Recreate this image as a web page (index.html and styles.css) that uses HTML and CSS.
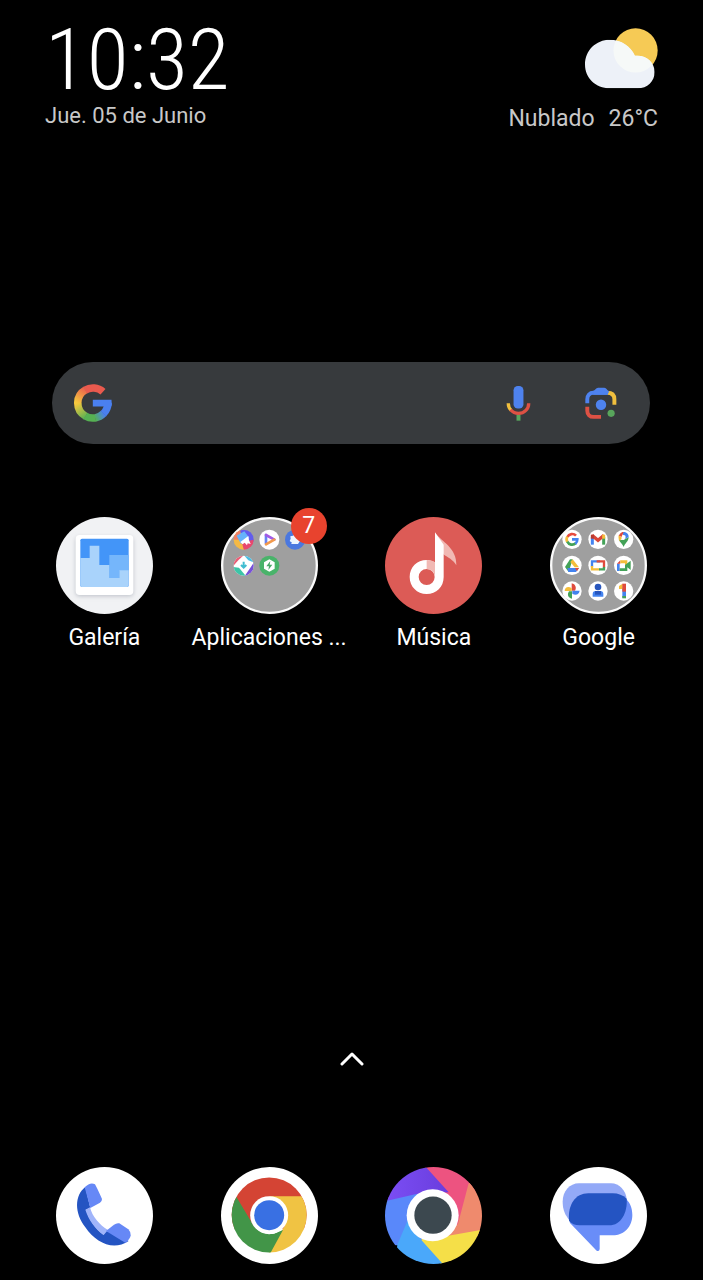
FILE: index.html
```html
<!DOCTYPE html>
<html lang="es">
<head>
<meta charset="utf-8">
<meta name="viewport" content="width=device-width, initial-scale=1">
<title>Inicio</title>
<link rel="stylesheet" href="styles.css">
</head>
<body>
<header class="status">
  <div class="clock">
    <time class="clock-time">10:32</time>
    <span class="clock-date">Jue. 05 de Junio</span>
  </div>
  <div class="weather">
    <svg class="weather-icon" viewBox="284 40 218 182" aria-hidden="true">
      <defs><clipPath id="cloud"><path d="M358 75C392 75 420 94 433 123C466 119 492 142 492 171C492 199 470 220 441 220H358C316 220 284 190 284 149C284 107 317 75 358 75Z"/></clipPath></defs>
      <circle cx="435" cy="107" r="66" fill="#f6ca55"/>
      <g clip-path="url(#cloud)"><path fill="#edf1f8" d="M280 70H500V225H280Z"/><circle cx="435" cy="107" r="66" fill="#f6f9f8"/></g>
    </svg>
    <p class="weather-text"><span>Nublado</span><span>26°C</span></p>
  </div>
</header>
<main class="home">
  <form class="search" role="search">
    <svg class="search-logo" viewBox="101 101 115 116" fill="none" stroke-width="23" aria-hidden="true">
      <defs>
        <linearGradient id="g1" gradientUnits="userSpaceOnUse" x1="140" y1="115" x2="112" y2="159"><stop stop-color="#e95a4e"/><stop offset="1" stop-color="#f6c83e"/></linearGradient>
        <linearGradient id="g2" gradientUnits="userSpaceOnUse" x1="112" y1="159" x2="140" y2="203"><stop stop-color="#f6c83e"/><stop offset="1" stop-color="#56b153"/></linearGradient>
        <linearGradient id="g3" gradientUnits="userSpaceOnUse" x1="163" y1="205" x2="192" y2="190"><stop stop-color="#56b153"/><stop offset="1" stop-color="#4a80f0"/></linearGradient>
      </defs>
      <path stroke="#e95a4e" d="M189 124.500A46 46 0 0 0 134 120"/>
      <path stroke="url(#g1)" d="M135 119.200A46 46 0 0 0 112 160"/>
      <path stroke="url(#g2)" d="M112 159A46 46 0 0 0 136 199.300"/>
      <path stroke="#56b153" d="M135 198.800A46 46 0 0 0 166 204.300"/>
      <path stroke="url(#g3)" d="M165 204.500A46 46 0 0 0 191 191"/>
      <path stroke="#4a80f0" d="M190.500 191.500A46 46 0 0 0 204 159"/>
      <path fill="#4a80f0" d="M158 149H215L216 164Q215 168 213 170H158Z"/>
    </svg>
    <input class="search-input" type="search" aria-label="Buscar">
    <button class="search-button" type="button" aria-label="Búsqueda por voz">
      <svg class="mic" viewBox="80 92 74 106" fill="none" stroke-width="10" aria-hidden="true">
        <path fill="#58a55c" d="M111 178H123V197H111Z"/>
        <path stroke="#f0bf3e" d="M86 144C86 153 89 160 95 166"/>
        <path stroke="#dd5144" d="M93 164C99 171 108 175 117 175C135 175 148 161 148 144"/>
        <rect x="102" y="92" width="30" height="68" rx="13" fill="#4e82ee"/>
      </svg>
    </button>
    <button class="search-button" type="button" aria-label="Google Lens">
      <svg class="lens" viewBox="317 96 98 97" fill="none" stroke-width="12" aria-hidden="true">
        <path stroke="#f0bf3e" d="M385 113C400 113 407 120 407 133V150"/>
        <path stroke="#4e82ee" d="M324 145V133C324 121 331 113 343 113H386"/>
        <path fill="#4e82ee" d="M342 108C348 106 350 98 357 98H376C383 98 385 107 391 109L386 119H342Z"/>
        <path stroke="#dd5144" d="M324 156V168C324 180 332 187 343 187H366"/>
        <circle cx="366" cy="150" r="16" fill="#4e82ee"/><circle cx="397" cy="176" r="11" fill="#58a55c"/>
      </svg>
    </button>
  </form>
  <nav class="grid" aria-label="Aplicaciones">
    <a class="app" href="#galeria">
      <svg class="app-icon" viewBox="31 36 291 291" aria-hidden="true">
        <defs><filter id="soft" x="-20%" y="-20%" width="140%" height="140%"><feGaussianBlur stdDeviation="6"/></filter></defs>
        <circle cx="176.500" cy="181.500" r="145.500" fill="#f1f2f4"/>
        <rect x="90" y="96" width="173" height="178" rx="12" fill="#bfc3ca" filter="url(#soft)"/>
        <rect x="90" y="90" width="173" height="180" rx="12" fill="#fff"/>
        <rect x="104" y="101" width="145" height="145" rx="5" fill="#4395f8"/>
        <path fill="#75b6fb" d="M191 150H249V197H221V220H191Z"/>
        <path fill="#a9d3fb" d="M104 159H132V122H161V180H191V219H221V196H249V241Q249 246 244 246H109Q104 246 104 241Z"/>
      </svg>
      <span class="app-label">Galería</span>
    </a>
    <a class="app" href="#aplicaciones">
      <span class="icon-wrap">
        <svg class="app-icon" viewBox="106 50 291 291" aria-hidden="true">
          <defs>
            <clipPath id="c1"><circle cx="174" cy="118" r="30"/></clipPath>
            <clipPath id="c2"><circle cx="174" cy="196" r="30"/></clipPath>
          </defs>
          <circle cx="251.500" cy="195.500" r="142" fill="#9f9f9f" stroke="#fafafa" stroke-width="7"/>
          <g clip-path="url(#c1)">
            <path fill="#f5b944" d="M140 85H180V150H140Z"/><path fill="#625cec" d="M160 85H210V125H175Z"/><path fill="#e8486e" d="M168 125L210 117V150H175Z"/><path fill="#ef8067" d="M140 85H165L160 118H140Z"/>
            <path fill="#66b3fb" d="M153 106L176 93L191 113L166 131Z"/><path fill="#fff" d="M164 125L188 107L190 120L195 131L186 129L184 135L177 127L171 132Z"/>
          </g>
          <circle cx="251" cy="118" r="30" fill="#fff"/>
          <g fill="none" stroke-width="8" stroke-linecap="round" stroke-linejoin="round"><path stroke="#6784f2" d="M241 104V129"/><path stroke="#a25be5" d="M241 104L266 118"/><path stroke="#f29a4d" d="M266 118L241 132"/></g>
          <circle cx="328" cy="118" r="30" fill="#4b78df"/><path fill="#edf5ff" d="M328 101L333 105L340 104L341 112L345 118L341 125L337 131H316L319 127L312 122L315 115L314 108L322 106Z"/>
          <g clip-path="url(#c2)">
            <path fill="#fff" d="M140 160H210V230H140Z"/><path fill="#ea5e76" d="M140 200V160H179L158 180Z"/><path fill="#49bde4" d="M171 160H210V188L188 180Z"/><path fill="#7750d9" d="M210 178V230H175L193 204Z"/><path fill="#3cc4a7" d="M140 200L160 202L183 230H140Z"/>
            <path stroke="#42bdd0" stroke-width="6" fill="none" d="M174 184V202M166 194L174 202L182 194"/>
          </g>
          <circle cx="251" cy="196" r="30" fill="#49b36a"/><path fill="#fff" d="M251 177L267 186V205L251 214L235 205V186Z"/><path fill="#49a767" d="M254 182L242 198H250L248 209L260 193H252Z"/>
        </svg>
        <span class="badge">7</span>
      </span>
      <span class="app-label">Aplicaciones ...</span>
    </a>
    <a class="app" href="#musica">
      <svg class="app-icon" viewBox="31 36 291 291" aria-hidden="true">
        <circle cx="176.500" cy="181.500" r="145.500" fill="#dc5b56"/>
        <path fill="#f1b9b4" d="M181 83C201 110 247 128 245 181C235 164 220 158 206 148Z"/>
        <path fill="#fff" fill-rule="evenodd" d="M181 82L207 119V216C207 246 185 267 156 267C127 267 105 245 105 216C105 187 127 165 156 165C165 165 173 168 181 172ZM156 192A24 24 0 1 0 156 240A24 24 0 1 0 156 192Z"/>
        <path fill="#f1b9b4" d="M156 165C166 165 173 167 181 172V216C180 204 171 192 156 192Z"/>
      </svg>
      <span class="app-label">Música</span>
    </a>
    <a class="app" href="#google">
      <svg class="app-icon" viewBox="31 36 291 291" aria-hidden="true">
        <circle cx="176.500" cy="181.500" r="142" fill="#9f9f9f" stroke="#fafafa" stroke-width="7"/>
        <g fill="#fff"><circle cx="97" cy="103" r="29"/><circle cx="175" cy="103" r="29"/><circle cx="252" cy="103" r="29"/><circle cx="97" cy="181" r="29"/><circle cx="175" cy="181" r="29"/><circle cx="252" cy="181" r="29"/><circle cx="97" cy="258" r="29"/><circle cx="175" cy="258" r="29"/><circle cx="252" cy="258" r="29"/></g>
        <g fill="none" stroke-width="8"><path stroke="#e64b3e" d="M109 92A16 16 0 0 0 83 96"/><path stroke="#f4bd3a" d="M83 95A16 16 0 0 0 83 111"/><path stroke="#43a258" d="M83 110A16 16 0 0 0 108 115"/><path stroke="#4383ef" d="M97 103H113A16 16 0 0 1 107 116"/></g>
        <g fill="none" stroke-width="9"><path stroke="#4383ef" d="M158 119V96"/><path stroke="#43a258" d="M192 119V96"/><path stroke="#d94538" stroke-width="10" d="M157 91L175 106L193 91"/><path stroke="#b63a32" d="M158 101V89"/><path stroke="#f4bd3a" d="M192 101V89"/></g>
        <path fill="#43a258" d="M237 104C241 112 249 116 252 126C255 115 267 110 267 96L252 105Z"/><path fill="#4383ef" d="M252 81C262 81 267 88 267 96L256 102L247 83Z"/><path fill="#df4b3d" d="M241 86C244 83 247 81 252 81L246 96L237 92Z"/><path fill="#f4bd3a" d="M237 91L247 98L240 109C236 102 236 96 237 91Z"/><circle cx="252" cy="96" r="6" fill="#fff"/>
        <path fill="#43a258" d="M91 163H99L87 201L76 186Z"/><path fill="#f4bd3a" d="M99 163L118 187H105L92 171Z"/><path fill="#4383ef" d="M83 189H118L109 201H86Z"/><path fill="#df4b3d" d="M106 189H118L112 199Z"/>
        <g fill="none" stroke-width="7"><path stroke="#4383ef" d="M157 185V169H181"/><path stroke="#df4b3d" d="M171 169H193V188"/><path stroke="#f4bd3a" d="M157 183V193H180"/><path stroke="#43a258" d="M178 193H193V186"/></g>
        <path fill="#4383ef" d="M232 176H240V198H232Z"/><path fill="#df4b3d" d="M232 176L242 166V176Z"/><path fill="#f4bd3a" d="M242 166H263V185H256V175H242Z"/><path fill="#43a258" d="M240 190H256V180L273 167V195L263 187V198H240Z"/>
        <path fill="#df4b3d" d="M96 257V235C108 237 111 249 106 257Z"/><path fill="#4383ef" d="M98 257H120C118 270 107 272 98 266Z"/><path fill="#43a258" d="M97 259V281C84 279 82 268 88 259Z"/><path fill="#f4bd3a" d="M96 258H75C75 246 87 243 96 250Z"/>
        <circle cx="175" cy="246" r="10" fill="#2856bd"/><path fill="#4383ef" d="M159 275V267Q159 258 168 258H182Q191 258 191 267V275Z"/><path fill="#2856bd" d="M166 258H184V269H166Z"/>
        <path fill="#4383ef" d="M248 248H259V278H248Z"/><path fill="#f4bd3a" d="M238 243L249 236V252H238Z"/><path fill="#df4b3d" d="M248 236H259V260H248Z"/><path fill="#43a258" d="M248 273H259V280H248Z"/>
      </svg>
      <span class="app-label">Google</span>
    </a>
  </nav>
  <button class="drawer" type="button" aria-label="Abrir cajón de aplicaciones">
    <svg class="drawer-icon" viewBox="0 0 24 14" aria-hidden="true"><path d="M2 12L12 2L22 12" fill="none" stroke="#fff" stroke-width="3" stroke-linecap="round" stroke-linejoin="round"/></svg>
  </button>
</main>
<footer class="dock">
  <a class="app" href="#telefono" aria-label="Teléfono">
    <svg class="app-icon" viewBox="31 35 291 291" aria-hidden="true">
      <circle cx="176.500" cy="180.500" r="145.500" fill="#fff"/>
      <path fill="#2454c2" d="M119 95C86 120 86 173 119 216C151 263 203 288 249 257L181 226L173 238C150 220 130 192 121 163L134 158Z"/>
      <path fill="#a0b4fa" d="M119 163L133 156C140 185 162 209 187 224L174 239C148 221 128 192 119 163Z"/>
      <path fill="#6688f6" d="M117 96Q134 79 148 87Q150 89 169 131Q169 139 163 142L134 158Z"/>
      <path fill="#6688f6" d="M181 227L205 208Q213 202 221 204L248 222Q256 230 255 240Q254 250 240 263Z"/>
    </svg>
  </a>
  <a class="app" href="#chrome" aria-label="Chrome">
    <svg class="app-icon" viewBox="31 35 291 291" aria-hidden="true">
      <defs><clipPath id="chrome"><circle cx="175.500" cy="179" r="112.500"/></clipPath></defs>
      <circle cx="176.500" cy="180.500" r="145.500" fill="#fff"/>
      <g clip-path="url(#chrome)"><path fill="#d44434" d="M50 50H300V220H50Z"/><path fill="#f0c343" d="M176 123H300V300H170L224 208Z"/><path fill="#429548" d="M50 79L127 208Q148 240 190 235L217 224L170 310H50Z"/></g>
      <circle cx="175.500" cy="179.500" r="57" fill="#fff"/><circle cx="175.500" cy="179.500" r="45" fill="#3970e3"/>
    </svg>
  </a>
  <a class="app" href="#camara" aria-label="Fotos">
    <svg class="app-icon" viewBox="31 35 291 291" aria-hidden="true">
      <defs>
        <clipPath id="lens"><circle cx="176.500" cy="180.500" r="145.500"/></clipPath>
        <linearGradient id="p1"><stop stop-color="#7c4ff6"/><stop offset="1" stop-color="#6a3ddd"/></linearGradient>
      </defs>
      <g clip-path="url(#lens)">
        <path fill="#ed5380" d="M140 20H310V90L250 240L200 180Z"/>
        <path fill="#ef8a6d" d="M282 84L340 60V240L200 260L250 205Z"/>
        <path fill="#f5df48" d="M325 223V340H210L120 235L200 245Z"/>
        <path fill="#5988fa" d="M20 130L180 100L140 256L70 270H20Z"/>
        <path fill="#4aa8fa" d="M101 190L140 254L210 332H60L68 268Z"/>
        <path fill="url(#p1)" d="M20 20H140L222 111L125 116L20 140Z"/>
      </g>
      <circle cx="174" cy="180" r="78" fill="#fff"/><circle cx="175" cy="179.500" r="56" fill="#3c484f"/>
    </svg>
  </a>
  <a class="app" href="#mensajes" aria-label="Mensajes">
    <svg class="app-icon" viewBox="31 35 291 291" aria-hidden="true">
      <circle cx="176.500" cy="180.500" r="145.500" fill="#fff"/>
      <path fill="#93a9f7" d="M118 84H214C239 84 259 106 261 132L240 210H120L89 194C78 181 69 165 69 139C69 108 90 84 118 84Z"/>
      <path fill="#698df8" d="M259 131C271 142 278 158 278 179C278 213 254 240 219 240H180V281Q179 290 171 286L91 203L88 190H230Z"/>
      <path fill="#2454c2" d="M146 114H219C236 114 250 120 261 130C264 172 244 210 208 210H120C106 210 96 205 88 196C84 148 107 114 146 114Z"/>
    </svg>
  </a>
</footer>
</body>
</html>
```
FILE: styles.css
```css
* {
  box-sizing: border-box;
}

body {
  display: flex;
  flex-direction: column;
  min-height: 100vh;
  margin: 0;
  background: #000;
  color: #fff;
  font-family: Roboto, "Noto Sans", sans-serif;
  font-size: 23px;
  line-height: 28px;
}

button {
  padding: 0;
  border: 0;
  background: none;
  cursor: pointer;
}

svg {
  display: block;
}

.status {
  display: flex;
  justify-content: space-between;
  padding: 28px 45px 0;
  color: #c8c8c8;
}

.clock {
  display: flex;
  flex-direction: column;
  gap: 10px;
}

.clock-time {
  color: #fff;
  font-family: "Roboto Condensed", "Liberation Sans Narrow", Roboto, sans-serif;
  font-size: 86px;
  font-weight: 300;
  line-height: 64px;
}

.clock-date {
  font-size: 22px;
}

.weather {
  display: flex;
  flex-direction: column;
  align-items: flex-end;
  gap: 16px;
}

.weather-icon {
  width: 73px;
  height: 61px;
}

.weather-text {
  display: flex;
  gap: 14px;
  margin: 0;
}

.home {
  display: flex;
  flex: 1;
  flex-direction: column;
}

.search {
  display: flex;
  align-items: center;
  height: 82px;
  margin: 229px 53px 0 52px;
  padding: 0 22px;
  border-radius: 41px;
  background: #373a3d;
}

.search-logo {
  flex: none;
  width: 38px;
  height: 38px;
}

.search-input {
  flex: 1;
  min-width: 0;
  height: 48px;
  padding: 0 16px;
  border: 0;
  outline: 0;
  background: none;
  color: #fff;
  font: inherit;
}

.search-button {
  display: grid;
  flex: none;
  width: 54px;
  height: 54px;
  margin-left: 29px;
  place-items: center;
}

.mic {
  width: 25px;
  height: 35px;
}

.lens {
  width: 32px;
  height: 32px;
}

.grid,
.dock {
  display: grid;
  grid-template-columns: repeat(4, 1fr);
  padding: 0 22px;
}

.grid {
  margin-top: 73px;
}

.app {
  display: flex;
  flex-direction: column;
  align-items: center;
  gap: 10px;
  color: #fff;
  text-decoration: none;
}

.app-icon {
  width: 97px;
  height: 97px;
}

.app-label {
  white-space: nowrap;
}

.icon-wrap {
  position: relative;
}

.badge {
  position: absolute;
  top: -9px;
  right: -9px;
  width: 36px;
  height: 36px;
  border-radius: 50%;
  background: #e8432e;
  line-height: 36px;
  text-align: center;
}

.drawer {
  display: grid;
  width: 48px;
  height: 48px;
  margin: auto auto 84px;
  place-items: center;
}

.drawer-icon {
  width: 24px;
  height: 14px;
}

.dock {
  padding-bottom: 16px;
}
```
